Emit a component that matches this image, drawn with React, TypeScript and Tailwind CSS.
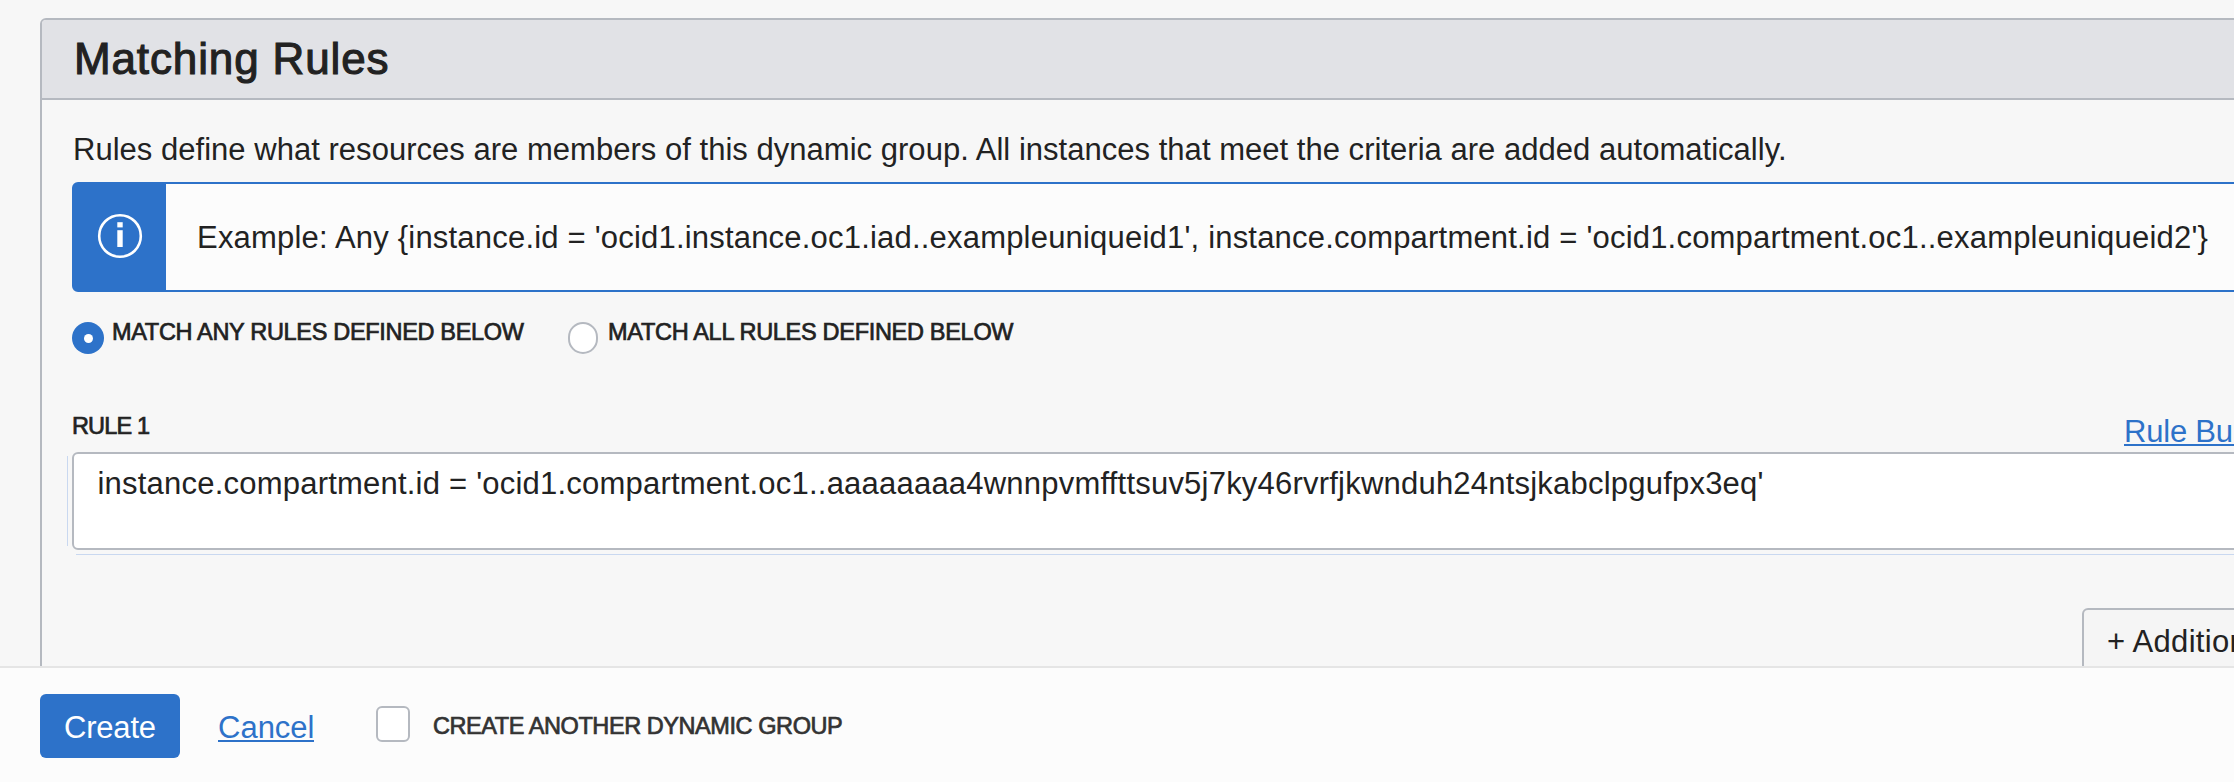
const BODY = "text-[31px] leading-9 whitespace-nowrap";
const LABEL =
  "whitespace-nowrap text-[23.5px] leading-7 [-webkit-text-stroke:0.7px_currentColor]";

function InfoIcon() {
  return (
    <svg width="46" height="46" viewBox="0 0 46 46" fill="none">
      <circle cx="23" cy="23" r="20.8" stroke="#fff" strokeWidth="2.6" />
      <rect x="20.3" y="9.2" width="5.4" height="5.2" fill="#fff" />
      <rect x="20.3" y="17.2" width="5.4" height="16.8" fill="#fff" />
    </svg>
  );
}

function InfoBanner() {
  return (
    <div className="mt-3.5 flex h-[110px] rounded-md border-2 border-[#2d72c9] bg-[#fcfcfc]">
      <div className="flex w-[92px] shrink-0 items-center justify-center bg-[#2d72c9] pb-0.5">
        <InfoIcon />
      </div>
      <p className={`${BODY} pl-[31px] pt-9 tracking-[0.2px]`}>
        Example: Any {"{"}instance.id = 'ocid1.instance.oc1.iad..exampleuniqueid1', instance.compartment.id =
        'ocid1.compartment.oc1..exampleuniqueid2'{"}"}
      </p>
    </div>
  );
}

function MatchOptions() {
  return (
    <div className="mt-[30px] flex h-8">
      <label className="flex w-[496px]">
        <span className="flex h-8 w-8 shrink-0 items-center justify-center rounded-full bg-[#2d72c9]">
          <span className="h-[9px] w-[9px] rounded-full bg-white" />
        </span>
        <span className={`${LABEL} -mt-1 pl-2 tracking-[-0.32px]`}>MATCH ANY RULES DEFINED BELOW</span>
      </label>
      <label className="flex">
        <span className="h-8 w-[30px] shrink-0 rounded-[15px] border-2 border-[#b5b9c0] bg-white" />
        <span className={`${LABEL} -mt-1 pl-2.5 tracking-[-0.3px]`}>MATCH ALL RULES DEFINED BELOW</span>
      </label>
    </div>
  );
}

function RuleEditor() {
  return (
    <section className="pt-10">
      <div className="flex h-[58px] justify-between pr-[30px]">
        <h2 className={`${LABEL} pt-[18px] tracking-[-0.85px]`}>RULE 1</h2>
        <a className={`${BODY} mt-5 mr-16 h-8 w-[112px] border-b-2 border-[#2d72c9] tracking-[-0.2px] text-[#2d72c9]`}>
          Rule Bu
        </a>
      </div>
      <div className="relative">
        <div className="absolute top-1 -left-[5px] h-[90px] w-px bg-[#c9d8f0]" />
        <div className="h-[98px] rounded-md border-2 border-[#b5b9c0] bg-white pt-3 pl-[23.5px]">
          <p className={`${BODY} tracking-[0.215px]`}>
            instance.compartment.id = 'ocid1.compartment.oc1..aaaaaaaa4wnnpvmffttsuv5j7ky46rvrfjkwnduh24ntsjkabclpgufpx3eq'
          </p>
        </div>
        <div className="absolute -bottom-[5px] left-1 h-px w-full bg-[#c9d8f0]" />
      </div>
      <div className="mt-[58px] flex justify-end">
        <button className={`${BODY} h-16 w-[248px] rounded-md border-2 border-[#b5b9c0] bg-[#f5f5f5] pt-1 pl-[23px] text-left tracking-[0.3px]`}>
          + Addition
        </button>
      </div>
    </section>
  );
}

function Footer() {
  return (
    <footer className="flex h-[116px] shrink-0 border-t-2 border-[#e5e5e5] bg-[#fcfcfc] pt-[26px] pl-10">
      <button className={`${BODY} h-16 w-[140px] rounded-md bg-[#2d72c9] pt-1 pl-6 text-left tracking-[-0.2px] text-white`}>
        Create
      </button>
      <a className={`${BODY} mt-4 ml-[38px] h-8 w-24 border-b-2 border-[#2d72c9] text-[#2d72c9]`}>Cancel</a>
      <label className="ml-[62px] flex">
        <span className="mt-3 h-9 w-[34px] rounded-md border-2 border-[#b5b9c0] bg-white" />
        <span className={`${LABEL} pt-[18px] pl-[23px] tracking-[-0.43px] text-[#333]`}>
          CREATE ANOTHER DYNAMIC GROUP
        </span>
      </label>
    </footer>
  );
}

export default function App() {
  return (
    <div className="flex h-[782px] w-full flex-col overflow-hidden bg-[#f7f7f7] font-['Liberation_Sans',Arial,sans-serif] text-[#222]">
      <main className="h-[666px] shrink-0 overflow-hidden pt-[18px] pl-10">
        <div className="h-[720px] w-[2322px] rounded-md border-2 border-[#b5b9c0]">
          <header className="h-20 rounded-t border-b-2 border-[#b5b9c0] bg-[#e1e2e6] pt-3.5 pl-8">
            <h1 className="text-[44px] leading-[50px] tracking-[0.87px] [-webkit-text-stroke:1.1px_currentColor]">
              Matching Rules
            </h1>
          </header>
          <div className="px-[30px] pt-8">
            <p className={`${BODY} pl-px tracking-[0.025px]`}>
              Rules define what resources are members of this dynamic group. All instances that meet the criteria are
              added automatically.
            </p>
            <InfoBanner />
            <MatchOptions />
            <RuleEditor />
          </div>
        </div>
      </main>
      <Footer />
    </div>
  );
}
